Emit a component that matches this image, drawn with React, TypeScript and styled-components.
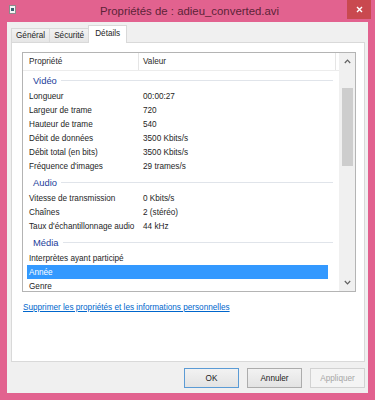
import { createGlobalStyle, styled } from "styled-components"

const GlobalStyle = createGlobalStyle`
  html, body { margin: 0; padding: 0; }
  body { font-family: "Liberation Sans", Arial, sans-serif; }
`

const Window = styled.div`
  width: 375px;
  height: 400px;
  background: #e2628f;
  display: flex;
  flex-direction: column;
  overflow: hidden;
`

const TitleBar = styled.div`
  height: 22px;
  display: grid;
  grid-template-columns: 28px 1fr 28px;
  align-items: start;
`

const AppIcon = styled.div`
  padding: 5px 0 0 9px;
  line-height: 0;
`

const Title = styled.div`
  text-align: center;
  font-size: 11.4px;
  line-height: 22px;
  color: #5c2338;
  padding-left: 4px;
`

const CloseButton = styled.div`
  width: 24px;
  height: 19px;
  background: #c9494f;
  color: #fff;
  display: flex;
  align-items: center;
  justify-content: center;
  line-height: 0;
`

const Body = styled.div`
  flex: 1;
  padding: 0 7px 7px;
  display: flex;
`

const Client = styled.div`
  flex: 1;
  background: #f0f0f0;
  padding: 4px 3px 4px 4px;
  display: flex;
  flex-direction: column;
`

const TabStrip = styled.div`
  height: 17px;
  display: flex;
  align-items: flex-end;
  margin-bottom: -1px;
  position: relative;
  z-index: 1;
`

const Tab = styled.div<{ $active?: boolean }>`
  box-sizing: border-box;
  height: ${(p) => (p.$active ? "18px" : "15px")};
  margin-left: ${(p) => (p.$active ? "-1px" : "0")};
  padding: ${(p) => (p.$active ? "3px 6px 0" : "2px 4px 0")};
  border: 1px solid #d9d9d9;
  border-bottom: ${(p) => (p.$active ? "none" : "1px solid #d9d9d9")};
  border-left: ${(p) => (p.$active ? "1px solid #d9d9d9" : "none")};
  background: ${(p) => (p.$active ? "#fff" : "linear-gradient(#f2f2f2, #e6e6e6)")};
  font-size: 8.2px;
  line-height: 10px;
  color: #1e1e1e;
  &:first-child { border-left: 1px solid #d9d9d9; }
`

const Panel = styled.div`
  box-sizing: border-box;
  height: 320px;
  background: #fff;
  border: 1px solid #d9d9d9;
  padding: 9px 8px 0 10px;
  display: flex;
  flex-direction: column;
`

const ListView = styled.div`
  height: 240px;
  box-sizing: border-box;
  border: 1px solid #b4b4b4;
  display: flex;
  overflow: hidden;
`

const ListMain = styled.div`
  flex: 1;
  display: flex;
  flex-direction: column;
  overflow: hidden;
`

const Header = styled.div`
  box-sizing: border-box;
  height: 18px;
  flex: none;
  border-bottom: 1px solid #ececec;
  display: flex;
`

const HeaderCell = styled.div<{ $w: number; $pad: number }>`
  box-sizing: border-box;
  width: ${(p) => p.$w}px;
  padding-left: ${(p) => p.$pad}px;
  border-right: 1px solid #e5e5e5;
  font-size: 8.2px;
  line-height: 18px;
  color: #2a2a2a;
`

const Group = styled.div`
  height: 18px;
  flex: none;
  display: flex;
  align-items: center;
  margin: 0 6px 0 4px;
  padding-left: 6px;
  font-size: 9.4px;
  color: #23409a;
`

const GroupLine = styled.div`
  flex: 1;
  height: 1px;
  background: #e0e4ea;
  margin-left: 4px;
`

const Row = styled.div<{ $selected?: boolean }>`
  height: 14px;
  flex: none;
  display: flex;
  align-items: center;
  margin: 0 11px 0 4px;
  background: ${(p) => (p.$selected ? "#3399ff" : "transparent")};
  color: ${(p) => (p.$selected ? "#fff" : "#1e1e1e")};
  font-size: 8.2px;
`

const NameCell = styled.div`
  width: 114px;
  padding-left: 2px;
  white-space: nowrap;
`

const ValueCell = styled.div`
  white-space: nowrap;
`

const ScrollBar = styled.div`
  width: 16px;
  flex: none;
  background: #f0f0f0;
  display: flex;
  flex-direction: column;
`

const ScrollArrow = styled.div`
  height: 17px;
  display: flex;
  align-items: center;
  justify-content: center;
  line-height: 0;
`

const Track = styled.div`
  flex: 1;
`

const Thumb = styled.div`
  height: 78px;
  margin: 18px 2px 0 3px;
  background: #cdcdcd;
`

const Link = styled.a`
  margin-top: 10px;
  padding-left: 1px;
  font-size: 8.2px;
  line-height: 12px;
  color: #0066cc;
  text-decoration: underline;
  cursor: pointer;
`

const ButtonRow = styled.div`
  margin-top: 6px;
  display: flex;
  justify-content: flex-end;
  gap: 8px;
`

const Button = styled.button<{ $primary?: boolean }>`
  box-sizing: border-box;
  width: 55px;
  height: 20px;
  padding: 0;
  font-family: inherit;
  font-size: 8.2px;
  color: ${(p) => (p.disabled ? "#a6a6a6" : "#1a1a1a")};
  background: ${(p) => (p.disabled ? "#f4f4f4" : "linear-gradient(#f2f2f2, #e3e3e3)")};
  border: 1px solid ${(p) => (p.$primary ? "#5b9bd5" : p.disabled ? "#d2d2d2" : "#acacac")};
`

type Item = { group: string } | { name: string; value?: string; selected?: boolean }

const items: Item[] = [
  { group: "Vidéo" },
  { name: "Longueur", value: "00:00:27" },
  { name: "Largeur de trame", value: "720" },
  { name: "Hauteur de trame", value: "540" },
  { name: "Débit de données", value: "3500 Kbits/s" },
  { name: "Débit total (en bits)", value: "3500 Kbits/s" },
  { name: "Fréquence d'images", value: "29 trames/s" },
  { group: "Audio" },
  { name: "Vitesse de transmission", value: "0 Kbits/s" },
  { name: "Chaînes", value: "2 (stéréo)" },
  { name: "Taux d'échantillonnage audio", value: "44 kHz" },
  { group: "Média" },
  { name: "Interprètes ayant participé" },
  { name: "Année", selected: true },
  { name: "Genre" },
]

function Chevron({ up }: { up?: boolean }) {
  return (
    <svg width="7" height="5" viewBox="0 0 7 5">
      <path
        d={up ? "M0.8 4 L3.5 1.2 L6.2 4" : "M0.8 1 L3.5 3.8 L6.2 1"}
        fill="none"
        stroke="#606060"
        strokeWidth="1.2"
      />
    </svg>
  )
}

export default function App() {
  return (
    <>
      <GlobalStyle />
      <Window>
        <TitleBar>
          <AppIcon>
            <svg width="7" height="9" viewBox="0 0 7 9">
              <rect x="0.5" y="0.5" width="6" height="8" fill="#f4f4f4" stroke="#8c8c8c" />
              <rect x="2" y="3" width="3" height="3" fill="#3a6272" />
            </svg>
          </AppIcon>
          <Title>Propriétés de : adieu_converted.avi</Title>
          <CloseButton>
            <svg width="7" height="7" viewBox="0 0 7 7">
              <path d="M1 1 L6 6 M6 1 L1 6" stroke="#fff" strokeWidth="1.4" />
            </svg>
          </CloseButton>
        </TitleBar>
        <Body>
          <Client>
            <TabStrip>
              <Tab>Général</Tab>
              <Tab>Sécurité</Tab>
              <Tab $active>Détails</Tab>
            </TabStrip>
            <Panel>
              <ListView>
                <ListMain>
                  <Header>
                    <HeaderCell $w={116} $pad={6}>Propriété</HeaderCell>
                    <HeaderCell $w={197} $pad={4}>Valeur</HeaderCell>
                  </Header>
                  {items.map((it, i) =>
                    "group" in it ? (
                      <Group key={i}>
                        {it.group}
                        <GroupLine />
                      </Group>
                    ) : (
                      <Row key={i} $selected={it.selected}>
                        <NameCell>{it.name}</NameCell>
                        <ValueCell>{it.value}</ValueCell>
                      </Row>
                    )
                  )}
                </ListMain>
                <ScrollBar>
                  <ScrollArrow><Chevron up /></ScrollArrow>
                  <Track><Thumb /></Track>
                  <ScrollArrow><Chevron /></ScrollArrow>
                </ScrollBar>
              </ListView>
              <Link>Supprimer les propriétés et les informations personnelles</Link>
            </Panel>
            <ButtonRow>
              <Button $primary>OK</Button>
              <Button>Annuler</Button>
              <Button disabled>Appliquer</Button>
            </ButtonRow>
          </Client>
        </Body>
      </Window>
    </>
  )
}
